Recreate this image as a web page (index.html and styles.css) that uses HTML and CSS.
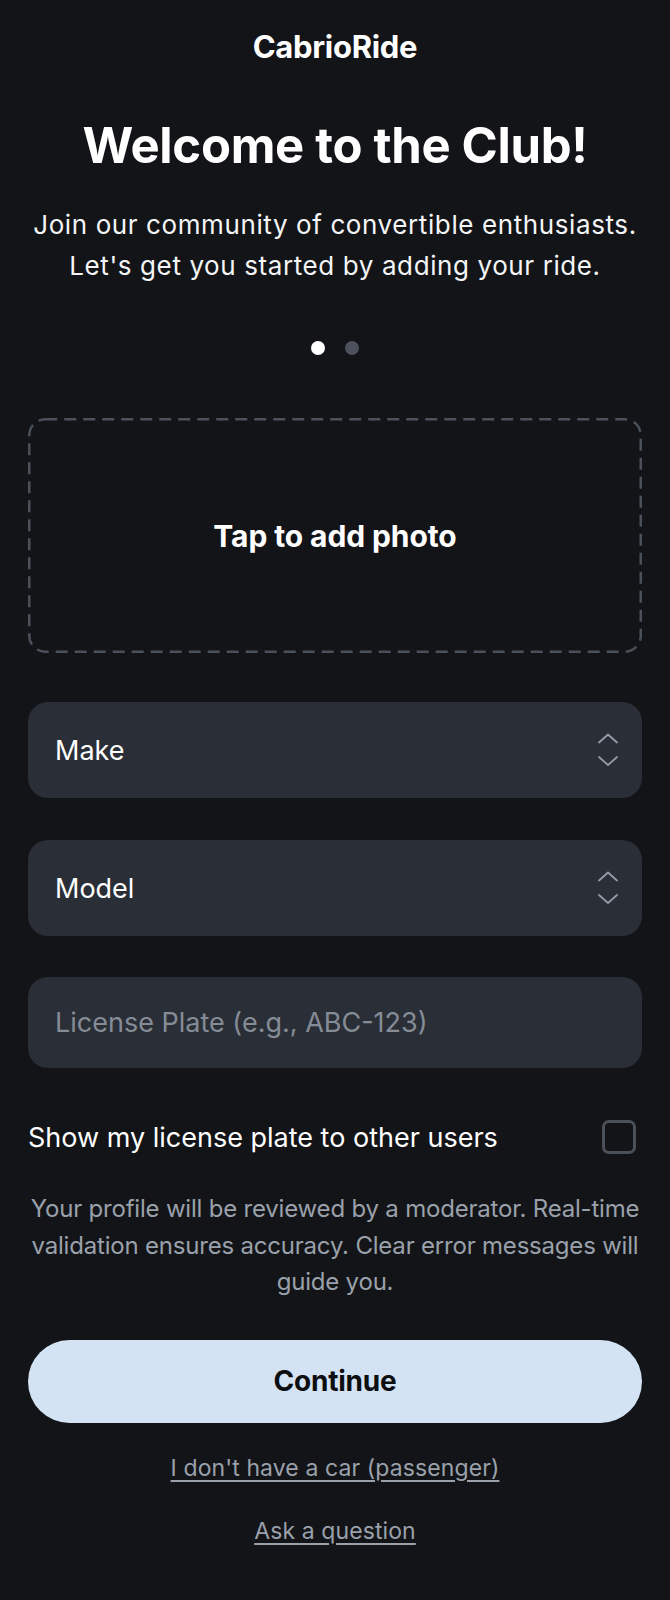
FILE: index.html
```html
<!DOCTYPE html>
<html lang="en">
<head>
<meta charset="utf-8">
<title>CabrioRide</title>
<link rel="stylesheet" href="styles.css">
</head>
<body>
<main class="screen">
  <header class="brand">CabrioRide</header>
  <h1 class="title">Welcome to the Club!</h1>
  <p class="intro">Join our community of convertible enthusiasts.<br>Let's get you started by adding your ride.</p>
  <div class="dots">
    <span class="dot dot-active"></span>
    <span class="dot"></span>
  </div>
  <button class="photo" type="button">
    <svg class="photo-border" width="614" height="235" viewBox="0 0 614 235" aria-hidden="true">
      <rect x="1.25" y="1.25" width="611.5" height="232.5" rx="16" ry="16" fill="none" stroke="#4a515b" stroke-width="2.5" stroke-dasharray="12 7"/>
    </svg>
    <span class="photo-text">Tap to add photo</span>
  </button>
  <div class="field field-select">
    <span class="field-value">Make</span>
    <svg class="chevrons" width="22" height="36" viewBox="0 0 22 36" aria-hidden="true">
      <path d="M2 10.5 L11 2.5 L20 10.5" fill="none" stroke="#949ba5" stroke-width="1.8" stroke-linecap="round" stroke-linejoin="round"/>
      <path d="M2 25 L11 33 L20 25" fill="none" stroke="#949ba5" stroke-width="1.8" stroke-linecap="round" stroke-linejoin="round"/>
    </svg>
  </div>
  <div class="field field-select">
    <span class="field-value">Model</span>
    <svg class="chevrons" width="22" height="36" viewBox="0 0 22 36" aria-hidden="true">
      <path d="M2 10.5 L11 2.5 L20 10.5" fill="none" stroke="#949ba5" stroke-width="1.8" stroke-linecap="round" stroke-linejoin="round"/>
      <path d="M2 25 L11 33 L20 25" fill="none" stroke="#949ba5" stroke-width="1.8" stroke-linecap="round" stroke-linejoin="round"/>
    </svg>
  </div>
  <div class="field field-input">
    <span class="field-placeholder">License Plate (e.g., ABC-123)</span>
  </div>
  <label class="toggle-row">
    <span class="toggle-label">Show my license plate to other users</span>
    <span class="checkbox"></span>
  </label>
  <p class="note">Your profile will be reviewed by a moderator. Real-time<br>validation ensures accuracy. Clear error messages will<br>guide you.</p>
  <button class="continue" type="button">Continue</button>
  <a class="link link-first" href="#">I don't have a car (passenger)</a>
  <a class="link link-second" href="#">Ask a question</a>
</main>
</body>
</html>
```

FILE: styles.css
```css
* { box-sizing: border-box; }

html, body {
  margin: 0;
  padding: 0;
  background: #131418;
}

body {
  font-family: Inter, "Noto Sans", "Liberation Sans", sans-serif;
  color: #ffffff;
  min-height: 1600px;
}

.screen {
  display: flex;
  flex-direction: column;
  align-items: stretch;
  padding: 29px 28px 40px;
}

.brand {
  text-align: center;
  font-size: 31px;
  line-height: 36px;
  font-weight: 700;
  letter-spacing: -0.3px;
}

.title {
  margin: 53px 0 0;
  text-align: center;
  font-size: 49px;
  line-height: 56px;
  font-weight: 700;
  letter-spacing: -0.3px;
}

.intro {
  margin: 30px -10px 0;
  text-align: center;
  font-size: 26px;
  line-height: 41px;
  font-weight: 400;
  letter-spacing: 0.6px;
  color: #f4f5f7;
  white-space: nowrap;
}

.dots {
  margin-top: 55px;
  display: flex;
  justify-content: center;
  gap: 20px;
}

.dot {
  width: 14px;
  height: 14px;
  border-radius: 50%;
  background: #4a515b;
}

.dot-active { background: #ffffff; }

.photo {
  position: relative;
  margin-top: 63px;
  height: 235px;
  border: 0;
  padding: 0;
  background: transparent;
  display: flex;
  align-items: center;
  justify-content: center;
  font-family: inherit;
  color: #ffffff;
}

.photo-border {
  position: absolute;
  inset: 0;
}

.photo-text {
  font-size: 30px;
  font-weight: 700;
  letter-spacing: -0.1px;
  line-height: 36px;
}

.field {
  display: flex;
  align-items: center;
  justify-content: space-between;
  background: #2a2e36;
  border-radius: 20px;
  padding: 0 23px 0 27px;
}

.field-select { height: 96px; }
.photo + .field { margin-top: 49px; }
.field-select + .field-select { margin-top: 42px; }

.field-input {
  margin-top: 41px;
  height: 91px;
}

.field-value {
  font-size: 27px;
  color: #ffffff;
}

.field-placeholder {
  font-size: 27px;
  color: #858c96;
}

.chevrons { display: block; }

.toggle-row {
  margin-top: 52px;
  display: flex;
  align-items: center;
  justify-content: space-between;
  padding-right: 6px;
  height: 34px;
}

.toggle-label {
  font-size: 27px;
  color: #ffffff;
}

.checkbox {
  width: 34px;
  height: 34px;
  border: 3px solid #4a515b;
  border-radius: 7px;
}

.note {
  margin: 37px -10px 0;
  text-align: center;
  font-size: 24px;
  line-height: 36.5px;
  color: #9aa1ab;
  letter-spacing: -0.2px;
  white-space: nowrap;
}

.continue {
  margin-top: 39px;
  height: 83px;
  border: 0;
  border-radius: 42px;
  background: #d3e3f4;
  color: #0d0e10;
  font-family: inherit;
  font-size: 28px;
  font-weight: 700;
  letter-spacing: -0.2px;
}

.link {
  align-self: center;
  font-size: 23px;
  line-height: 30px;
  color: #9aa1ab;
  text-decoration: underline;
  text-underline-offset: 4px;
  letter-spacing: 0.1px;
}

.link-first { margin-top: 30px; }
.link-second { margin-top: 33px; }
```
